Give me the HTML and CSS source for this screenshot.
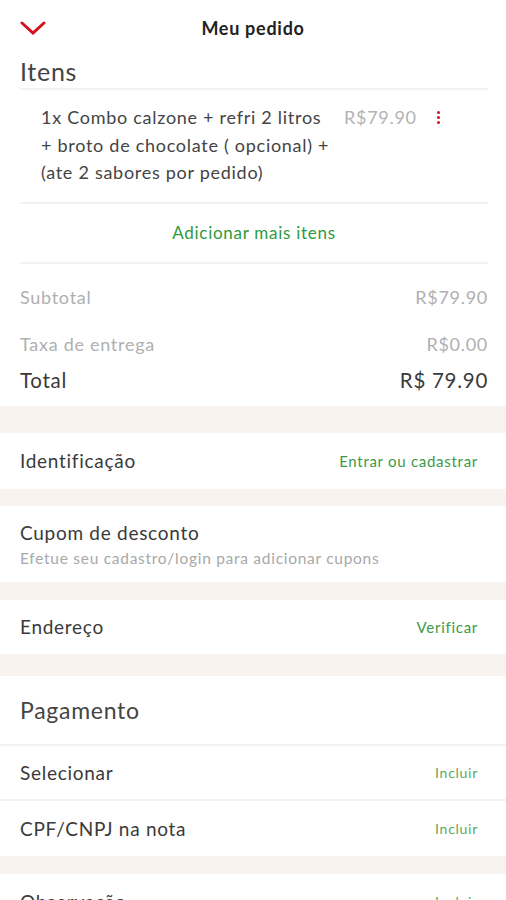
FILE: index.html
```html
<!DOCTYPE html>
<html lang="pt-BR">
<head>
    <meta charset="UTF-8">
    <meta name="viewport" content="width=device-width, initial-scale=1.0">
    <title>Meu pedido</title>
    <link rel="stylesheet" href="styles.css">
</head>
<body>
    <div class="header">
        <svg class="back" width="26" height="14" viewBox="0 0 26 14">
            <path d="M2 2 L13 12 L24 2" fill="none" stroke="#d4111c" stroke-width="3" stroke-linecap="round"/>
        </svg>
        <h1>Meu pedido</h1>
    </div>

    <div class="items">
        <h2 class="items-title">Itens</h2>
        <div class="line"></div>
        <div class="item">
            <p class="item-name">1x Combo calzone + refri 2 litros<br>+ broto de chocolate ( opcional) +<br>(ate 2 sabores por pedido)</p>
            <span class="item-price">R$79.90</span>
            <span class="dots"><i></i><i></i><i></i></span>
        </div>
        <div class="line"></div>
        <div class="add-more">Adicionar mais itens</div>
        <div class="line"></div>
        <div class="totals">
            <div class="sum-row sub"><span>Subtotal</span><span>R$79.90</span></div>
            <div class="sum-row fee"><span>Taxa de entrega</span><span>R$0.00</span></div>
            <div class="sum-row total"><span>Total</span><span>R$ 79.90</span></div>
        </div>
    </div>

    <div class="band b1"></div>
    <div class="row h56">
        <span class="label">Identificação</span>
        <span class="link">Entrar ou cadastrar</span>
    </div>
    <div class="band b2"></div>
    <div class="row coupon">
        <div>
            <span class="label">Cupom de desconto</span>
            <p class="hint">Efetue seu cadastro/login para adicionar cupons</p>
        </div>
    </div>
    <div class="band b3"></div>
    <div class="row h54">
        <span class="label">Endereço</span>
        <span class="link">Verificar</span>
    </div>
    <div class="band b4"></div>
    <div class="row pay-title">
        <span class="section">Pagamento</span>
    </div>
    <div class="sep"></div>
    <div class="row h53">
        <span class="label">Selecionar</span>
        <span class="link small">Incluir</span>
    </div>
    <div class="sep"></div>
    <div class="row h55">
        <span class="label">CPF/CNPJ na nota</span>
        <span class="link small">Incluir</span>
    </div>
    <div class="band b5"></div>
    <div class="row h55">
        <span class="label">Observação</span>
        <span class="link small">Incluir</span>
    </div>
</body>
</html>
```

FILE: styles.css
```css
body {
    margin: 0;
    font-family: Lato, "Open Sans", sans-serif;
    letter-spacing: 0.045em;
    color: #3a3a3a;
    background-color: white;
    width: 506px;
    overflow: hidden;
}
p, h1, h2 {
    margin: 0;
}
.header {
    height: 54px;
    display: flex;
    align-items: center;
    justify-content: center;
    position: relative;
}
.header .back {
    position: absolute;
    left: 20px;
    top: 21px;
}
.header h1 {
    font-size: 18px;
    font-weight: 700;
    color: #222;
    margin-top: 2px;
}
.items {
    padding: 0 18px 0 20px;
}
.items-title {
    font-size: 25px;
    font-weight: 400;
    line-height: 34px;
    color: #444;
}
.line {
    height: 2px;
    background-color: #f2f2f2;
}
.item {
    display: flex;
    align-items: flex-start;
    padding: 14px 0 15px 21px;
}
.item-name {
    width: 303px;
    font-size: 18px;
    line-height: 27.5px;
    color: #444;
    white-space: nowrap;
}
.item-price {
    font-size: 18px;
    line-height: 27.5px;
    color: #b3b3b3;
}
.dots {
    display: flex;
    flex-direction: column;
    gap: 2px;
    margin: 7px 0 0 20px;
}
.dots i {
    width: 3px;
    height: 3px;
    border-radius: 50%;
    background-color: #d4111c;
}
.add-more {
    height: 58px;
    display: flex;
    align-items: center;
    justify-content: center;
    font-size: 17px;
    color: #2f9a3c;
}
.totals {
    padding: 21px 0 14px;
}
.sum-row {
    display: flex;
    justify-content: space-between;
    font-size: 18px;
    line-height: 24px;
    color: #b0b0b0;
}
.sum-row.fee {
    margin-top: 23px;
}
.sum-row.total {
    margin-top: 12px;
    font-size: 20.5px;
    color: #3a3a3a;
}
.band {
    background-color: #f8f3ef;
}
.b1 { height: 27px; }
.b2 { height: 17px; }
.b3 { height: 18px; }
.b4 { height: 22px; }
.b5 { height: 18px; }
.row {
    display: flex;
    align-items: center;
    justify-content: space-between;
    padding: 0 28px 0 20px;
}
.h53 { height: 53px; }
.h54 { height: 54px; }
.h55 { height: 55px; }
.h56 { height: 56px; }
.coupon {
    height: 76px;
}
.pay-title {
    height: 68px;
}
.label {
    font-size: 19px;
    color: #3a3a3a;
}
.hint {
    margin-top: 5px;
    font-size: 15.5px;
    color: #a8a8a8;
}
.section {
    font-size: 23px;
    color: #444;
}
.link {
    font-size: 15px;
    color: #3d9a46;
}
.link.small {
    font-size: 14px;
    color: #5aaa62;
}
.sep {
    height: 2px;
    background-color: #f2f2f2;
}
```
